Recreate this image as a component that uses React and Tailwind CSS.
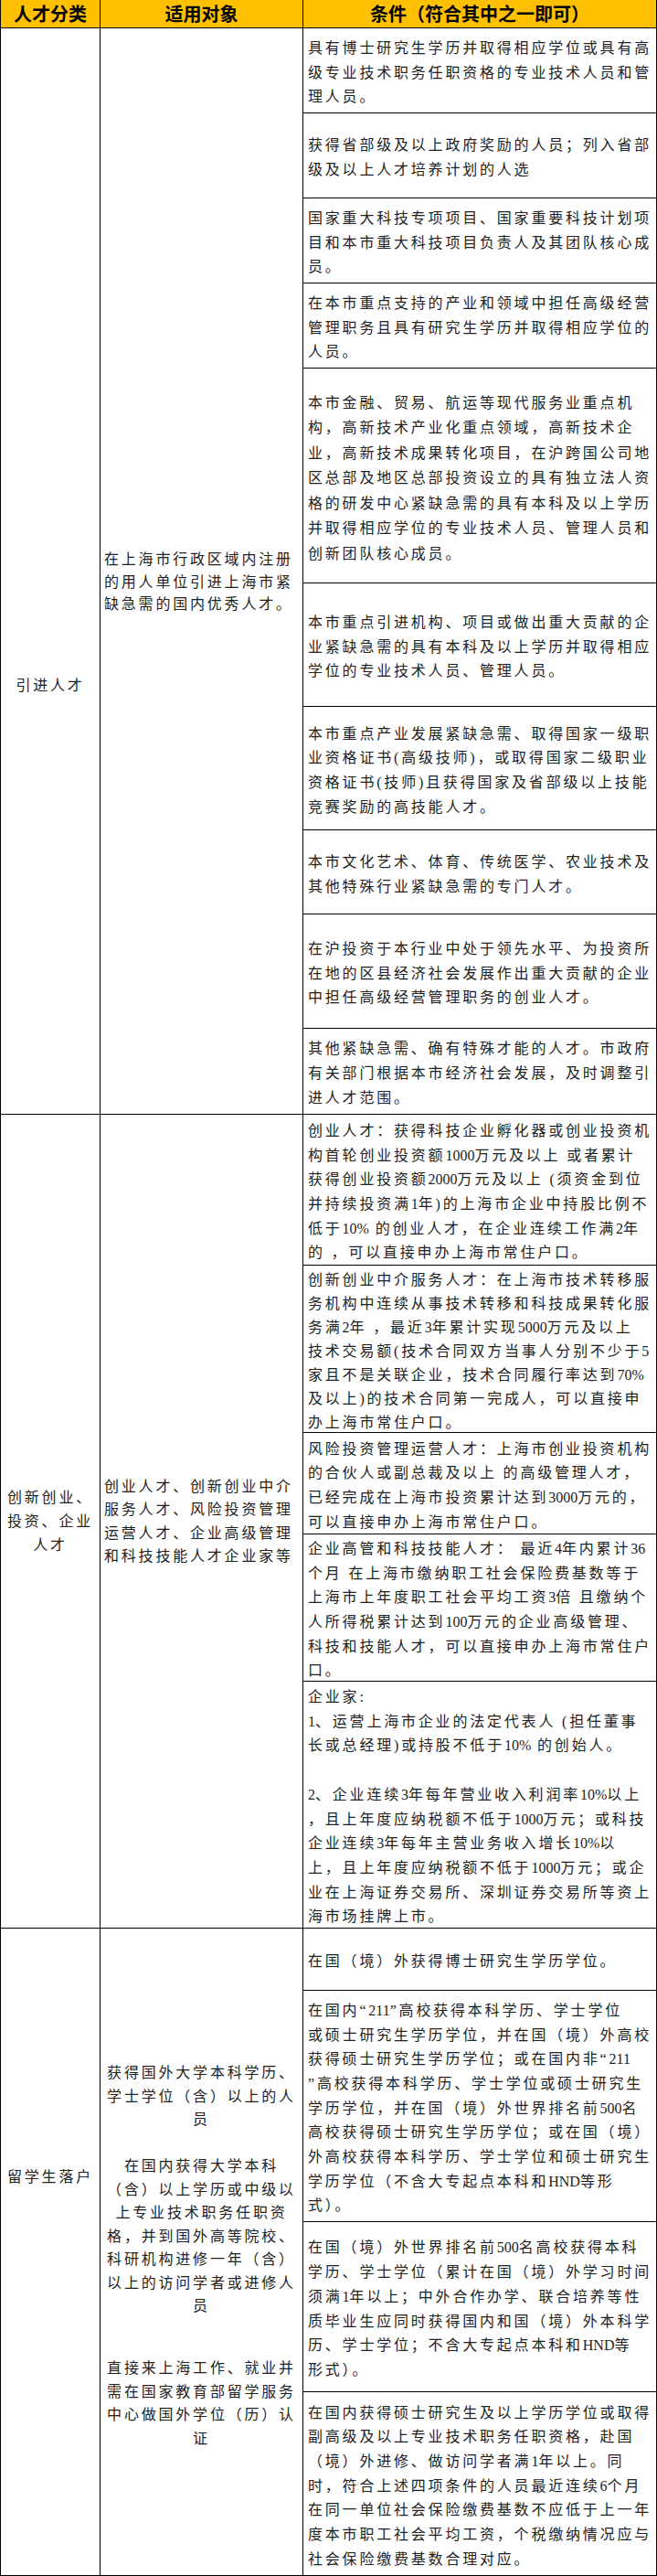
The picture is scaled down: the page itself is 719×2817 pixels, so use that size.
import React from "react";

const BODY = "font-['Liberation_Serif','Noto_Sans_CJK_SC',serif]";

// latin runs (digits, HND, %) are set without the wide CJK tracking
const rich = (s) =>
  s.split(/([0-9A-Za-z%]+)/).map((p, i) =>
    i % 2 ? (
      <span key={i} className="tracking-normal">
        {p}
      </span>
    ) : (
      p
    )
  );

const Lines = ({ lines, className = "" }) => (
  <div className={className}>
    {lines.map((l, i) => (
      <div key={i} className="whitespace-pre">
        {l ? rich(l) : "\u00a0"}
      </div>
    ))}
  </div>
);

const groups = [
  {
    cat: ["引进人才"],
    catClass: "justify-start pt-[706px]",
    target: [["在上海市行政区域内注册", "的用人单位引进上海市紧", "缺急需的国内优秀人才。"]],
    targetClass: "pt-[569px] pl-[4px] leading-[24.5px]",
    cells: [
      {
        h: "h-[93px]",
        lines: ["具有博士研究生学历并取得相应学位或具有高", "级专业技术职务任职资格的专业技术人员和管", "理人员。"],
      },
      {
        h: "h-[93px]",
        lines: ["获得省部级及以上政府奖励的人员；列入省部", "级及以上人才培养计划的人选"],
      },
      {
        h: "h-[93px]",
        lines: ["国家重大科技专项项目、国家重要科技计划项", "目和本市重大科技项目负责人及其团队核心成", "员。"],
      },
      {
        h: "h-[93px]",
        lines: ["在本市重点支持的产业和领域中担任高级经营", "管理职务且具有研究生学历并取得相应学位的", "人员。"],
      },
      {
        h: "h-[235px]",
        lh: "leading-[27.5px]",
        lines: [
          "本市金融、贸易、航运等现代服务业重点机",
          "构，高新技术产业化重点领域，高新技术企",
          "业，高新技术成果转化项目，在沪跨国公司地",
          "区总部及地区总部投资设立的具有独立法人资",
          "格的研发中心紧缺急需的具有本科及以上学历",
          "并取得相应学位的专业技术人员、管理人员和",
          "创新团队核心成员。",
        ],
      },
      {
        h: "h-[135px]",
        lines: ["本市重点引进机构、项目或做出重大贡献的企", "业紧缺急需的具有本科及以上学历并取得相应", "学位的专业技术人员、管理人员。"],
      },
      {
        h: "h-[135px]",
        lines: [
          "本市重点产业发展紧缺急需、取得国家一级职",
          "业资格证书(高级技师)，或取得国家二级职业",
          "资格证书(技师)且获得国家及省部级以上技能",
          "竞赛奖励的高技能人才。",
        ],
      },
      {
        h: "h-[92px]",
        lines: ["本市文化艺术、体育、传统医学、农业技术及", "其他特殊行业紧缺急需的专门人才。"],
      },
      {
        h: "h-[125px]",
        lines: ["在沪投资于本行业中处于领先水平、为投资所", "在地的区县经济社会发展作出重大贡献的企业", "中担任高级经营管理职务的创业人才。"],
      },
      {
        h: "h-[94px]",
        lines: ["其他紧缺急需、确有特殊才能的人才。市政府", "有关部门根据本市经济社会发展，及时调整引", "进人才范围。"],
      },
    ],
  },
  {
    cat: ["创新创业、", "投资、企业", "人才"],
    catClass: "justify-center",
    target: [["创业人才、创新创业中介", "服务人才、风险投资管理", "运营人才、企业高级管理", "和科技技能人才企业家等"]],
    targetClass: "justify-center pl-[4px] leading-[25.5px]",
    cells: [
      {
        h: "h-[165px]",
        lines: [
          "创业人才：获得科技企业孵化器或创业投资机",
          "构首轮创业投资额1000万元及以上 或者累计",
          "获得创业投资额2000万元及以上 (须资金到位",
          "并持续投资满1年)的上海市企业中持股比例不",
          "低于10% 的创业人才，在企业连续工作满2年",
          "的 ，可以直接申办上海市常住户口。",
        ],
      },
      {
        h: "h-[183px]",
        lh: "leading-[26px]",
        lines: [
          "创新创业中介服务人才：在上海市技术转移服",
          "务机构中连续从事技术转移和科技成果转化服",
          "务满2年 ，最近3年累计实现5000万元及以上",
          "技术交易额(技术合同双方当事人分别不少于5",
          "家且不是关联企业，技术合同履行率达到70%",
          "及以上)的技术合同第一完成人，可以直接申",
          "办上海市常住户口。",
        ],
      },
      {
        h: "h-[111px]",
        lines: [
          "风险投资管理运营人才：上海市创业投资机构",
          "的合伙人或副总裁及以上 的高级管理人才，",
          "已经完成在上海市投资累计达到3000万元的，",
          "可以直接申办上海市常住户口。",
        ],
      },
      {
        h: "h-[161px]",
        lines: [
          "企业高管和科技技能人才： 最近4年内累计36",
          "个月 在上海市缴纳职工社会保险费基数等于",
          "上海市上年度职工社会平均工资3倍 且缴纳个",
          "人所得税累计达到100万元的企业高级管理、",
          "科技和技能人才，可以直接申办上海市常住户",
          "口。",
        ],
      },
      {
        h: "h-[270px]",
        lines: [
          "企业家:",
          "1、运营上海市企业的法定代表人 (担任董事",
          "长或总经理)或持股不低于10% 的创始人。",
          "",
          "2、企业连续3年每年营业收入利润率10%以上",
          "，且上年度应纳税额不低于1000万元；或科技",
          "企业连续3年每年主营业务收入增长10%以",
          "上，且上年度应纳税额不低于1000万元；或企",
          "业在上海证券交易所、深圳证券交易所等资上",
          "海市场挂牌上市。",
        ],
      },
    ],
  },
  {
    cat: ["留学生落户"],
    catClass: "justify-start pt-[259px]",
    target: [
      ["获得国外大学本科学历、", "学士学位（含）以上的人", "员"],
      [
        "在国内获得大学本科",
        "（含）以上学历或中级以",
        "上专业技术职务任职资",
        "格，并到国外高等院校、",
        "科研机构进修一年（含）",
        "以上的访问学者或进修人",
        "员",
      ],
      ["直接来上海工作、就业并", "需在国家教育部留学服务", "中心做国外学位（历）认", "证"],
    ],
    targetClass: "pt-[145px] items-center text-center leading-[25.5px] gap-[25.5px] [&>*:last-child]:mt-[17px]",
    cells: [
      { h: "h-[68px]", lines: ["在国（境）外获得博士研究生学历学位。"] },
      {
        h: "h-[253px]",
        lines: [
          "在国内“211”高校获得本科学历、学士学位",
          "或硕士研究生学历学位，并在国（境）外高校",
          "获得硕士研究生学历学位；或在国内非“211",
          "”高校获得本科学历、学士学位或硕士研究生",
          "学历学位，并在国（境）外世界排名前500名",
          "高校获得硕士研究生学历学位；或在国（境）",
          "外高校获得本科学历、学士学位和硕士研究生",
          "学历学位（不含大专起点本科和HND等形",
          "式）。",
        ],
      },
      {
        h: "h-[186px]",
        lines: [
          "在国（境）外世界排名前500名高校获得本科",
          "学历、学士学位（累计在国（境）外学习时间",
          "须满1年以上；中外合作办学、联合培养等性",
          "质毕业生应同时获得国内和国（境）外本科学",
          "历、学士学位；不含大专起点本科和HND等",
          "形式）。",
        ],
      },
      {
        h: "h-[201px]",
        lines: [
          "在国内获得硕士研究生及以上学历学位或取得",
          "副高级及以上专业技术职务任职资格，赴国",
          "（境）外进修、做访问学者满1年以上。同",
          "时，符合上述四项条件的人员最近连续6个月",
          "在同一单位社会保险缴费基数不应低于上一年",
          "度本市职工社会平均工资，个税缴纳情况应与",
          "社会保险缴费基数合理对应。",
        ],
      },
    ],
  },
];

export default function App() {
  return (
    <div className={`w-[719px] bg-white text-[#222] text-[16px] tracking-[2.8px] ${BODY}`}>
      {/* header */}
      <div className="flex h-[31px] bg-[#ffc000] border-b border-black font-['Noto_Sans_CJK_SC',sans-serif] text-[20px] font-bold text-black tracking-normal leading-none">
        <div className="w-[110px] border-l border-r border-black flex items-center justify-center">人才分类</div>
        <div className="w-[222px] border-r border-black flex items-center justify-center">适用对象</div>
        <div className="flex-1 border-r border-black flex items-center justify-center">条件（符合其中之一即可）</div>
      </div>

      {groups.map((g, gi) => (
        <div key={gi} className="flex">
          <div className={`w-[110px] border-l border-r border-b border-black flex flex-col items-center text-center leading-[26px] ${g.catClass}`}>
            {g.cat.map((c, i) => (
              <div key={i} className="whitespace-pre">
                {c}
              </div>
            ))}
          </div>
          <div className={`w-[222px] border-r border-b border-black flex flex-col ${g.targetClass}`}>
            {g.target.map((block, i) => (
              <Lines key={i} lines={block} />
            ))}
          </div>
          <div className="flex-1 flex flex-col">
            {g.cells.map((c, i) => (
              <div
                key={i}
                className={`${c.h} border-r border-b border-black flex flex-col justify-center pl-[5px] pt-[6px] ${c.lh || "leading-[26.7px]"}`}
              >
                <Lines lines={c.lines} />
              </div>
            ))}
          </div>
        </div>
      ))}
    </div>
  );
}
